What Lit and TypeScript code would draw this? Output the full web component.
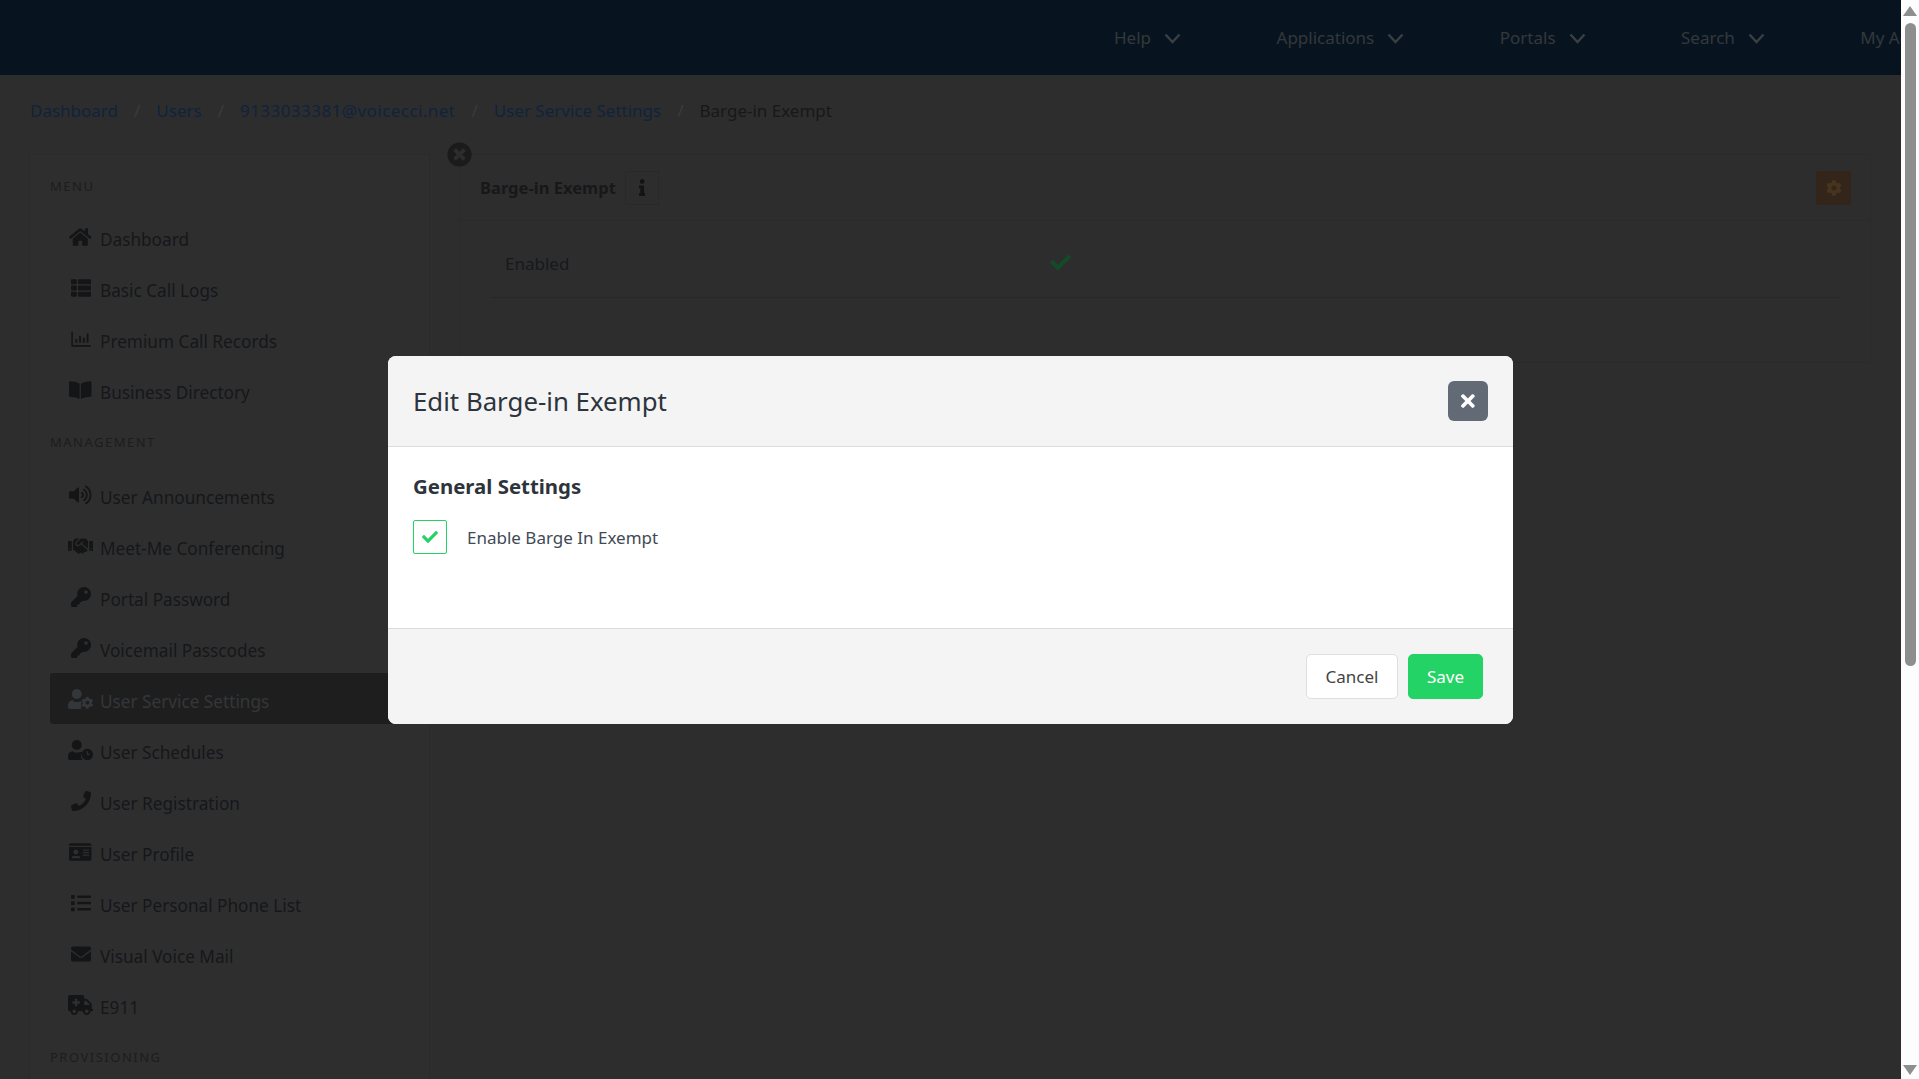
import { LitElement, html, css, svg } from "lit";
import { customElement } from "lit/decorators.js";

const ICONS: Record<string, [number, any]> = {
  home: [576, svg`<path d="M280.37 148.26L96 300.11V464a16 16 0 0 0 16 16l112.06-.29a16 16 0 0 0 15.92-16V368a16 16 0 0 1 16-16h64a16 16 0 0 1 16 16v95.64a16 16 0 0 0 16 16.05L464 480a16 16 0 0 0 16-16V300L295.67 148.26a12.19 12.19 0 0 0-15.3 0zM571.6 251.47L488 182.56V44.05a12 12 0 0 0-12-12h-56a12 12 0 0 0-12 12v72.61L318.47 43a48 48 0 0 0-61 0L4.34 251.47a12 12 0 0 0-1.6 16.9l25.5 31A12 12 0 0 0 45.15 301l235.22-193.74a12.19 12.19 0 0 1 15.3 0L530.9 301a12 12 0 0 0 16.9-1.6l25.5-31a12 12 0 0 0-1.7-16.93z"/>`],
  thlist: [512, svg`<path d="M149.333 216v80c0 13.255-10.745 24-24 24H24c-13.255 0-24-10.745-24-24v-80c0-13.255 10.745-24 24-24h101.333c13.255 0 24 10.745 24 24zM0 376v80c0 13.255 10.745 24 24 24h101.333c13.255 0 24-10.745 24-24v-80c0-13.255-10.745-24-24-24H24c-13.255 0-24 10.745-24 24zM125.333 32H24C10.745 32 0 42.745 0 56v80c0 13.255 10.745 24 24 24h101.333c13.255 0 24-10.745 24-24V56c0-13.255-10.745-24-24-24zm80 448H488c13.255 0 24-10.745 24-24v-80c0-13.255-10.745-24-24-24H205.333c-13.255 0-24 10.745-24 24v80c0 13.255 10.745 24 24 24zm-24-424v80c0 13.255 10.745 24 24 24H488c13.255 0 24-10.745 24-24V56c0-13.255-10.745-24-24-24H205.333c-13.255 0-24 10.745-24 24zm24 264H488c13.255 0 24-10.745 24-24v-80c0-13.255-10.745-24-24-24H205.333c-13.255 0-24 10.745-24 24v80c0 13.255 10.745 24 24 24z"/>`],
  chart: [512, svg`<path d="M496 408H48V72c0-5-3-8-8-8H16c-5 0-8 3-8 8v360c0 13 11 24 24 24h464c5 0 8-3 8-8v-32c0-5-3-8-8-8z"/><rect x="112" y="256" width="48" height="96" rx="8"/><rect x="208" y="176" width="48" height="176" rx="8"/><rect x="304" y="224" width="48" height="128" rx="8"/><rect x="400" y="112" width="48" height="240" rx="8"/>`],
  book: [576, svg`<path d="M542.22 32.05c-54.8 3.11-163.72 14.43-230.96 55.59-4.64 2.84-7.27 7.89-7.27 13.17v363.87c0 11.55 12.63 18.85 23.28 13.49 69.18-34.82 169.23-44.32 218.7-46.92 16.89-.89 30.02-14.43 30.02-30.66V62.75c.01-17.71-15.35-31.74-33.77-30.7zM264.73 87.64C197.5 46.48 88.58 35.17 33.78 32.05 15.36 31.01 0 45.04 0 62.75V400.6c0 16.24 13.13 29.78 30.02 30.66 49.49 2.6 149.59 12.11 218.77 46.95 10.62 5.35 23.21-1.94 23.21-13.46V100.63c0-5.29-2.62-10.14-7.27-12.99z"/>`],
  volume: [576, svg`<path d="M215.03 71.05L126.06 160H24c-13.26 0-24 10.74-24 24v144c0 13.25 10.74 24 24 24h102.06l88.97 88.95c15.03 15.03 40.97 4.47 40.97-16.97V88.02c0-21.46-25.96-31.98-40.97-16.97zm233.32-51.08c-11.17-7.33-26.18-4.24-33.51 6.95-7.34 11.17-4.22 26.18 6.95 33.51 66.27 43.49 105.82 116.6 105.82 195.58 0 78.98-39.55 152.09-105.82 195.58-11.17 7.32-14.29 22.34-6.95 33.5 7.04 10.71 21.93 14.56 33.51 6.95C528.27 439.58 576 351.33 576 256S528.27 72.43 448.35 19.97zM480 256c0-63.53-32.06-121.94-85.77-156.24-11.19-7.14-26.03-3.82-33.12 7.46s-3.78 26.21 7.41 33.36C408.27 165.97 432 209.11 432 256s-23.73 90.03-63.48 115.42c-11.19 7.14-14.5 22.07-7.41 33.36 6.51 10.36 21.12 15.14 33.12 7.46C447.94 377.94 480 319.54 480 256zm-141.77-76.87c-11.58-6.33-26.19-2.16-32.61 9.45-6.39 11.61-2.16 26.2 9.45 32.61C327.98 228.28 336 241.63 336 256c0 14.38-8.02 27.72-20.92 34.81-11.61 6.41-15.84 21-9.45 32.61 6.43 11.66 21.05 15.8 32.61 9.45 28.23-15.55 45.77-45 45.77-76.88s-17.54-61.32-45.78-76.86z"/>`],
  handshake: [640, svg`<path d="M434.7 64h-85.9c-8 0-15.7 3-21.6 8.4l-98.3 90c-.1.1-.2.3-.3.4-16.6 15.6-16.3 40.5-2.1 56 12.7 13.9 39.4 17.6 56.1 2.7.1-.1.3-.1.4-.2l79.9-73.2c6.5-5.9 16.7-5.5 22.6 1 6 6.5 5.5 16.6-1 22.6l-26.1 23.9L504 313.8c2.9 2.4 5.5 5 7.9 7.7V128l-54.6-54.6c-5.9-6-14.1-9.4-22.6-9.4zM544 128.2v223.9c0 17.7 14.3 32 32 32h64V128.2h-96zm48 223.9c-8.8 0-16-7.2-16-16s7.2-16 16-16 16 7.2 16 16-7.2 16-16 16zM0 384h64c17.7 0 32-14.3 32-32V128.2H0V384zm48-63.9c8.8 0 16 7.2 16 16s-7.2 16-16 16-16-7.2-16-16c0-8.9 7.2-16 16-16zm435.9 18.6L334.6 217.5l-30 27.5c-29.7 27.1-75.2 24.5-101.7-4.4-26.9-29.4-24.8-74.9 4.4-101.7L289.1 64h-83.8c-8.5 0-16.6 3.4-22.6 9.4L128 128v223.9h18.3l90.5 81.9c27.4 22.3 67.7 18.1 90-9.3l.2-.2 17.9 15.5c15.9 13 39.4 10.5 52.3-5.4l31.4-38.6 5.4 4.4c13.7 11.1 33.9 9.1 45-4.7l9.5-11.7c11.2-13.8 9.1-33.9-4.6-45.1z"/>`],
  key: [512, svg`<path d="M512 176.001C512 273.203 433.202 352 336 352c-11.22 0-22.19-1.062-32.827-3.069l-24.012 27.014A23.999 23.999 0 0 1 261.223 384H224v40c0 13.255-10.745 24-24 24h-40v40c0 13.255-10.745 24-24 24H24c-13.255 0-24-10.745-24-24v-78.059c0-6.365 2.529-12.47 7.029-16.971l161.802-161.802C163.108 213.814 160 195.271 160 176 160 78.798 238.797.001 335.999 0 433.488-.001 512 78.511 512 176.001zM336 128c0 26.51 21.49 48 48 48s48-21.49 48-48-21.49-48-48-48-48 21.49-48 48z"/>`],
  usercog: [640, svg`<circle cx="224" cy="128" r="128"/><path d="M128 288C57.300 288 0 345.300 0 416v48c0 26.500 21.500 48 48 48h300c-10-12-18-26-24-42l22-12c-2-14-2-28 0-42l-22-12c6-24 18-46 34-62l10-4c-15-12-40-20-48-20h-16c-22.200 10.200-46.900 16-73.300 16h-12c-26.400 0-51.100-5.800-73.300-16z"/><path d="M610.500 373.300c2.600-14.100 2.600-28.500 0-42.600l25.800-14.900c3-1.700 4.300-5.200 3.300-8.500-6.700-21.600-18.200-41.200-33.200-57.400-2.300-2.500-6-3.100-9-1.400l-25.800 14.900c-10.900-9.300-23.400-16.500-36.900-21.300v-29.800c0-3.400-2.400-6.400-5.700-7.100-22.300-5-45-4.800-66.200 0-3.300.7-5.700 3.700-5.700 7.100v29.800c-13.500 4.800-26 12-36.900 21.300l-25.800-14.900c-2.900-1.700-6.700-1.100-9 1.400-15 16.200-26.500 35.800-33.200 57.400-1 3.300.4 6.800 3.300 8.500l25.800 14.900c-2.600 14.100-2.600 28.500 0 42.600l-25.800 14.900c-3 1.700-4.300 5.200-3.300 8.500 6.700 21.600 18.200 41.100 33.200 57.400 2.300 2.500 6 3.100 9 1.400l25.800-14.900c10.900 9.300 23.400 16.500 36.900 21.300v29.800c0 3.400 2.400 6.400 5.700 7.100 22.300 5 45 4.800 66.200 0 3.300-.7 5.700-3.700 5.700-7.100v-29.800c13.500-4.800 26-12 36.900-21.300l25.800 14.900c2.900 1.700 6.700 1.100 9-1.400 15-16.200 26.500-35.800 33.200-57.400 1-3.300-.4-6.800-3.300-8.500l-25.800-14.900zM496 400.500c-26.800 0-48.500-21.800-48.500-48.500s21.800-48.500 48.500-48.500 48.500 21.800 48.500 48.500-21.700 48.500-48.500 48.500z"/>`],
  userclock: [640, svg`<circle cx="224" cy="128" r="128"/><path d="M128 288C57.300 288 0 345.300 0 416v48c0 26.500 21.500 48 48 48h320c-20-30-32-60-32-92 0-40 14-76 36-104-18-6-40-8-62-8h-6.700c-22.200 10.200-46.900 16-73.300 16h-12c-26.400 0-51.100-5.800-73.300-16z"/><path fill-rule="evenodd" d="M496 224c-79.600 0-144 64.400-144 144s64.400 144 144 144 144-64.400 144-144-64.400-144-144-144zm64 150.300c0 5.300-4.400 9.700-9.700 9.700h-60.600c-5.300 0-9.700-4.400-9.700-9.700v-76.600c0-5.300 4.400-9.700 9.700-9.700h12.600c5.300 0 9.700 4.400 9.700 9.700V352h38.300c5.300 0 9.700 4.400 9.700 9.700v12.600z"/>`],
  phone: [512, svg`<path d="M493.4 24.6l-104-24c-11.3-2.6-22.9 3.3-27.5 13.900l-48 112c-4.200 9.800-1.400 21.300 6.900 28l60.600 49.600c-36 76.700-98.900 140.500-177.200 177.200l-49.600-60.600c-6.800-8.300-18.200-11.100-28-6.900l-112 48C3.900 366.500-2 378.100.6 389.400l24 104C27.100 504.200 36.700 512 48 512c256.100 0 464-207.500 464-464 0-11.200-7.700-20.900-18.600-23.400z"/>`],
  idcard: [576, svg`<path d="M528 32H48C21.500 32 0 53.500 0 80v16h576V80c0-26.500-21.500-48-48-48zM0 432c0 26.500 21.500 48 48 48h480c26.500 0 48-21.500 48-48V128H0v304zm352-232c0-4.400 3.600-8 8-8h144c4.400 0 8 3.600 8 8v16c0 4.400-3.600 8-8 8H360c-4.400 0-8-3.600-8-8v-16zm0 64c0-4.400 3.600-8 8-8h144c4.400 0 8 3.600 8 8v16c0 4.400-3.600 8-8 8H360c-4.400 0-8-3.600-8-8v-16zm0 64c0-4.400 3.600-8 8-8h144c4.400 0 8 3.600 8 8v16c0 4.400-3.600 8-8 8H360c-4.400 0-8-3.600-8-8v-16zM176 192c35.300 0 64 28.700 64 64s-28.700 64-64 64-64-28.700-64-64 28.700-64 64-64zM67.100 396.200C75.500 370.500 99.600 352 128 352h8.200c12.300 5.100 25.700 8 39.800 8s27.600-2.900 39.800-8h8.200c28.400 0 52.500 18.500 60.900 44.200 3.200 9.900-5.200 19.800-15.600 19.800H82.700c-10.400 0-18.800-10-15.600-19.800z"/>`],
  list: [512, svg`<path d="M80 368H16a16 16 0 0 0-16 16v64a16 16 0 0 0 16 16h64a16 16 0 0 0 16-16v-64a16 16 0 0 0-16-16zm0-320H16A16 16 0 0 0 0 64v64a16 16 0 0 0 16 16h64a16 16 0 0 0 16-16V64a16 16 0 0 0-16-16zm0 160H16a16 16 0 0 0-16 16v64a16 16 0 0 0 16 16h64a16 16 0 0 0 16-16v-64a16 16 0 0 0-16-16zm416 176H176a16 16 0 0 0-16 16v32a16 16 0 0 0 16 16h320a16 16 0 0 0 16-16v-32a16 16 0 0 0-16-16zm0-320H176a16 16 0 0 0-16 16v32a16 16 0 0 0 16 16h320a16 16 0 0 0 16-16V80a16 16 0 0 0-16-16zm0 160H176a16 16 0 0 0-16 16v32a16 16 0 0 0 16 16h320a16 16 0 0 0 16-16v-32a16 16 0 0 0-16-16z"/>`],
  envelope: [512, svg`<path d="M502.300 190.800c3.900-3.100 9.700-.2 9.700 4.700V400c0 26.500-21.500 48-48 48H48c-26.500 0-48-21.500-48-48V195.600c0-5 5.700-7.800 9.700-4.700 22.400 17.400 52.100 39.500 154.100 113.600 21.100 15.400 56.700 47.800 92.200 47.600 35.700.3 72-32.800 92.300-47.600 102-74.100 131.600-96.300 154-113.700zM256 320c23.200.4 56.600-29.200 73.400-41.400 132.700-96.300 142.800-104.700 173.400-128.700 5.800-4.500 9.200-11.500 9.200-18.900v-19c0-26.500-21.500-48-48-48H48C21.500 64 0 85.500 0 112v19c0 7.400 3.400 14.300 9.200 18.900 30.600 23.900 40.700 32.400 173.400 128.700 16.800 12.200 50.200 41.800 73.400 41.400z"/>`],
  ambulance: [640, svg`<path d="M624 352h-16V243.900c0-12.700-5.100-24.900-14.100-33.900L494 110.100c-9-9-21.200-14.100-33.900-14.100H416V48c0-26.500-21.500-48-48-48H48C21.500 0 0 21.500 0 48v320c0 26.500 21.500 48 48 48h16c0 53 43 96 96 96s96-43 96-96h128c0 53 43 96 96 96s96-43 96-96h48c8.800 0 16-7.200 16-16v-32c0-8.800-7.200-16-16-16zM160 464c-26.500 0-48-21.500-48-48s21.500-48 48-48 48 21.500 48 48-21.500 48-48 48zm144-248c0 4.400-3.600 8-8 8h-56v56c0 4.400-3.600 8-8 8h-48c-4.400 0-8-3.600-8-8v-56h-56c-4.400 0-8-3.600-8-8v-48c0-4.400 3.600-8 8-8h56v-56c0-4.400 3.600-8 8-8h48c4.400 0 8 3.600 8 8v56h56c4.400 0 8 3.600 8 8v48zm176 248c-26.500 0-48-21.500-48-48s21.500-48 48-48 48 21.500 48 48-21.500 48-48 48zm80-208H416V144h44.100l99.900 99.900V256z"/>`],
  check: [512, svg`<path d="M173.898 439.404l-166.400-166.400c-9.997-9.997-9.997-26.206 0-36.204l36.203-36.204c9.997-10.998 26.207-9.998 36.204 0L192 312.690 432.095 72.596c9.997-9.997 26.207-9.997 36.204 0l36.203 36.204c9.997 9.997 9.997 26.206 0 36.204l-294.400 294.401c-9.998 9.997-26.207 9.997-36.204-.001z"/>`],
  times: [352, svg`<path d="M242.720 256l100.070-100.070c12.280-12.280 12.280-32.190 0-44.480l-22.240-22.240c-12.280-12.280-32.190-12.280-44.480 0L176 189.280 75.930 89.210c-12.280-12.280-32.190-12.280-44.480 0L9.210 111.450c-12.280 12.280-12.280 32.190 0 44.480L109.280 256 9.210 356.070c-12.280 12.280-12.280 32.190 0 44.480l22.240 22.240c12.280 12.280 32.200 12.280 44.480 0L176 322.720l100.070 100.070c12.280 12.280 32.200 12.280 44.480 0l22.240-22.240c12.280-12.280 12.280-32.190 0-44.480L242.720 256z"/>`],
  cog: [512, svg`<path d="M487.400 315.700l-42.600-24.600c4.300-23.200 4.300-47 0-70.200l42.600-24.600c4.900-2.800 7.100-8.600 5.500-14-11.100-35.600-30-67.800-54.700-94.600-3.800-4.100-10-5.100-14.800-2.300L380.800 110c-17.900-15.400-38.500-27.300-60.800-35.100V25.800c0-5.600-3.900-10.500-9.400-11.700-36.700-8.200-74.300-7.800-109.200 0-5.500 1.200-9.400 6.100-9.400 11.700V75c-22.200 7.900-42.800 19.800-60.800 35.100L88.700 85.500c-4.900-2.800-11-1.900-14.800 2.300-24.700 26.700-43.600 58.900-54.700 94.600-1.700 5.400.6 11.200 5.500 14L67.300 221c-4.300 23.200-4.300 47 0 70.200l-42.600 24.600c-4.900 2.800-7.100 8.600-5.500 14 11.100 35.600 30 67.800 54.700 94.600 3.800 4.100 10 5.100 14.800 2.300l42.600-24.600c17.900 15.400 38.500 27.300 60.800 35.100v49.200c0 5.600 3.900 10.500 9.400 11.700 36.700 8.200 74.300 7.800 109.200 0 5.500-1.200 9.400-6.100 9.400-11.700v-49.200c22.200-7.900 42.800-19.800 60.800-35.100l42.600 24.600c4.900 2.800 11 1.900 14.800-2.300 24.700-26.700 43.600-58.900 54.700-94.600 1.500-5.500-.7-11.300-5.600-14.100zM256 336c-44.100 0-80-35.900-80-80s35.900-80 80-80 80 35.900 80 80-35.900 80-80 80z"/>`],
  info: [192, svg`<path d="M20 424.229h20V279.771H20c-11.046 0-20-8.954-20-20V212c0-11.046 8.954-20 20-20h112c11.046 0 20 8.954 20 20v212.229h20c11.046 0 20 8.954 20 20V492c0 11.046-8.954 20-20 20H20c-11.046 0-20-8.954-20-20v-47.771c0-11.046 8.954-20 20-20zM96 0C56.235 0 24 32.235 24 72s32.235 72 72 72 72-32.235 72-72S135.764 0 96 0z"/>`],
  timescircle: [512, svg`<path d="M256 8C119 8 8 119 8 256s111 248 248 248 248-111 248-248S393 8 256 8zm121.600 313.100c4.700 4.700 4.700 12.300 0 17L338 377.600c-4.700 4.700-12.300 4.700-17 0L256 312l-65.100 65.600c-4.700 4.700-12.300 4.700-17 0L134.400 338c-4.700-4.700-4.700-12.300 0-17l65.600-65-65.600-65.100c-4.700-4.700-4.700-12.300 0-17l39.600-39.600c4.700-4.700 12.300-4.700 17 0l65 65.700 65.100-65.600c4.700-4.700 12.300-4.700 17 0l39.600 39.600c4.700 4.700 4.700 12.300 0 17L312 256l65.600 65.100z"/>`],
};

const icon = (name: string, h: number) => {
  const [w, body] = ICONS[name];
  return html`<svg class="ic" width=${(w / 512) * h} height=${h} viewBox="0 0 ${w} 512" fill="currentColor" aria-hidden="true">${body}</svg>`;
};

const chevron = html`<svg class="chev" width="17" height="11" viewBox="0 0 17 11" fill="none" stroke="currentColor" stroke-width="2.400"><path d="M1.500 1.500 8.500 9 15.500 1.500"/></svg>`;

const MENU: [string, string][] = [
  ["home", "Dashboard"],
  ["thlist", "Basic Call Logs"],
  ["chart", "Premium Call Records"],
  ["book", "Business Directory"],
];
const MANAGEMENT: [string, string, boolean?][] = [
  ["volume", "User Announcements"],
  ["handshake", "Meet-Me Conferencing"],
  ["key", "Portal Password"],
  ["key", "Voicemail Passcodes"],
  ["usercog", "User Service Settings", true],
  ["userclock", "User Schedules"],
  ["phone", "User Registration"],
  ["idcard", "User Profile"],
  ["list", "User Personal Phone List"],
  ["envelope", "Visual Voice Mail"],
  ["ambulance", "E911"],
];

@customElement("app-root")
export class AppRoot extends LitElement {
  static styles = css`
    :host {
      display: block;
      height: 1079px;
      overflow: hidden;
      position: relative;
      font-family: "Noto Sans", "Open Sans", sans-serif;
      font-size: 17px;
      background: #2d2d2d;
    }
    * { box-sizing: border-box; }
    .page { display: flex; height: 100%; }
    .main { width: 1901px; flex: none; overflow: hidden; }
    .nav {
      height: 75px;
      background: #07141f;
      color: #34383c;
      display: flex;
      align-items: center;
      padding-left: 1114px;
      white-space: nowrap;
      overflow: hidden;
    }
    .nav-inner { display: flex; align-items: center; gap: 95.5px; }
    .nav-item { display: flex; align-items: center; gap: 13px; }
    .chev { color: #3a3f44; margin-top: 2px; }
    .crumbs {
      height: 79px;
      display: flex;
      align-items: center;
      padding: 0 0 8px 30px;
      color: #17181a;
    }
    .crumbs a { color: #10233d; }
    .crumbs a.email { letter-spacing: 0.45px; }
    .crumbs .sep { color: #3b3b3b; margin: 0 16px; }
    .cols { display: flex; gap: 29px; padding: 0 30px 0 29px; align-items: flex-start; }
    .sidebar {
      width: 401px;
      flex: none;
      height: 1000px;
      background: #2e2e2e;
      border: 1px solid #2a2a2a;
      padding: 24px 20px 0;
    }
    .label {
      height: 14px;
      line-height: 14px;
      font-size: 13px;
      letter-spacing: 1.5px;
      color: #1c1d1f;
      margin: 20px 0 20px;
    }
    .label.first { margin: 0 0 18px; }
    .row {
      height: 51px;
      display: flex;
      align-items: center;
      padding: 6px 0 0 18px;
      font-size: 17.2px;
      color: #15171a;
      border-radius: 3px;
      white-space: nowrap;
    }
    .row .slot { width: 25px; display: flex; justify-content: center; margin: 0 7px 6px 0; color: #141517; }
    .row.active { background: #1e1e1e; color: #34373a; }
    .row.active .slot { color: #34373a; }
    .content {
      flex: 1;
      position: relative;
      height: 209px;
      background: #2d2d2d;
      border: 1px solid #2a2a2a;
    }
    .close-circle {
      position: absolute;
      left: -13px;
      top: -13px;
      color: #1b1b1b;
      display: flex;
    }
    .c-head {
      height: 66px;
      display: flex;
      align-items: center;
      padding: 0 19px 0 20px;
      border-bottom: 1px solid #2a2a2a;
    }
    .c-title { font-weight: 700; font-size: 16.55px; color: #17181a; }
    .info {
      width: 34px;
      height: 34px;
      margin-left: 9px;
      border: 1px solid #292929;
      border-radius: 2px;
      display: flex;
      align-items: center;
      justify-content: center;
      color: #131416;
    }
    .gear {
      margin-left: auto;
      width: 35px;
      height: 34px;
      background: #33251a;
      border-radius: 2px;
      display: flex;
      align-items: center;
      justify-content: center;
      color: #46341f;
    }
    .c-row {
      margin: 0 29px 0 30px;
      height: 77px;
      display: flex;
      align-items: center;
      padding: 8px 0 0 15px;
      border-bottom: 1px solid #272727;
      color: #17191c;
    }
    .c-row .lbl { width: 545px; }
    .c-row .ok { color: #134a27; display: flex; margin-bottom: 2px; }

    .scrollbar {
      width: 18px;
      flex: none;
      background: #fdfdfd;
      position: relative;
      display: flex;
      flex-direction: column;
      align-items: center;
      padding-top: 6px;
    }
    .arrow-up, .arrow-down { width: 0; height: 0; border-left: 7px solid transparent; border-right: 7px solid transparent; }
    .arrow-up { border-bottom: 10px solid #8e8e8e; }
    .arrow-down { border-top: 10px solid #8e8e8e; margin-top: 399px; }
    .thumb { width: 11px; height: 643px; margin-top: 7px; border-radius: 6px; background: #8e8e8e; }

    .overlay {
      position: absolute;
      left: 0;
      top: 0;
      width: 1901px;
      height: 1079px;
      display: flex;
      align-items: center;
      justify-content: center;
    }
    .modal {
      width: 1125px;
      height: 368px;
      border-radius: 8px;
      overflow: hidden;
      background: #fff;
      display: flex;
      flex-direction: column;
    }
    .m-head {
      height: 91px;
      flex: none;
      background: #f4f4f4;
      border-bottom: 1px solid #dcdcdc;
      display: flex;
      align-items: center;
      justify-content: space-between;
      padding: 0 25px;
    }
    .m-title { font-size: 25.8px; color: #2d343c; margin: 0; font-weight: 400; }
    .m-close {
      width: 40px;
      height: 40px;
      border-radius: 6px;
      background: #626b75;
      color: #fff;
      display: flex;
      align-items: center;
      justify-content: center;
      border: 0;
      padding: 0;
      font: inherit;
    }
    .m-body { flex: 1; padding: 24px 25px 0; }
    .m-h { font-size: 20.4px; font-weight: 700; color: #2d343c; line-height: 30px; }
    .check-row { display: flex; align-items: center; margin-top: 19px; }
    .box {
      width: 34px;
      height: 34px;
      border: 1px solid #24d366;
      border-radius: 2px;
      display: flex;
      align-items: center;
      justify-content: center;
      color: #24d366;
    }
    .check-row span { margin-left: 20px; padding-top: 2px; color: #3f4a55; }
    .m-foot {
      height: 96px;
      flex: none;
      background: #f4f4f4;
      border-top: 1px solid #dcdcdc;
      display: flex;
      justify-content: flex-end;
      align-items: center;
      gap: 10px;
      padding: 0 30px 0 0;
    }
    .btn {
      height: 45px;
      border-radius: 5px;
      font: inherit;
      display: flex;
      align-items: center;
      justify-content: center;
      padding: 0;
    }
    .cancel { width: 92px; background: #fff; border: 1px solid #dfdfdf; color: #444; }
    .save { width: 75px; background: #24d366; border: 1px solid #24d366; color: #fff; }
  `;

  private row(i: [string, string, boolean?]) {
    return html`<div class="row ${i[2] ? "active" : ""}"><span class="slot">${icon(i[0], 20)}</span><span>${i[1]}</span></div>`;
  }

  render() {
    return html`
      <div class="page">
        <div class="main">
          <header class="nav">
            <div class="nav-inner">
              ${["Help", "Applications", "Portals", "Search"].map((t) => html`<div class="nav-item">${t}${chevron}</div>`)}
              <div class="nav-item">My Account${chevron}</div>
            </div>
          </header>
          <nav class="crumbs">
            <a>Dashboard</a><span class="sep">/</span>
            <a>Users</a><span class="sep">/</span>
            <a class="email">9133033381@voicecci.net</a><span class="sep">/</span>
            <a>User Service Settings</a><span class="sep">/</span>
            <span>Barge-in Exempt</span>
          </nav>
          <div class="cols">
            <aside class="sidebar">
              <div class="label first">MENU</div>
              ${MENU.map((i) => this.row(i))}
              <div class="label">MANAGEMENT</div>
              ${MANAGEMENT.map((i) => this.row(i))}
              <div class="label">PROVISIONING</div>
            </aside>
            <section class="content">
              <span class="close-circle">${icon("timescircle", 25)}</span>
              <div class="c-head">
                <span class="c-title">Barge-in Exempt</span>
                <span class="info">${icon("info", 17)}</span>
                <span class="gear">${icon("cog", 16)}</span>
              </div>
              <div class="c-row"><span class="lbl">Enabled</span><span class="ok">${icon("check", 21)}</span></div>
            </section>
          </div>
        </div>
        <div class="scrollbar">
          <div class="arrow-up"></div>
          <div class="thumb"></div>
          <div class="arrow-down"></div>
        </div>
      </div>
      <div class="overlay">
        <div class="modal">
          <div class="m-head">
            <h2 class="m-title">Edit Barge-in Exempt</h2>
            <button class="m-close">${icon("times", 20)}</button>
          </div>
          <div class="m-body">
            <div class="m-h">General Settings</div>
            <div class="check-row"><div class="box">${icon("check", 16)}</div><span>Enable Barge In Exempt</span></div>
          </div>
          <div class="m-foot">
            <button class="btn cancel">Cancel</button>
            <button class="btn save">Save</button>
          </div>
        </div>
      </div>
    `;
  }
}
